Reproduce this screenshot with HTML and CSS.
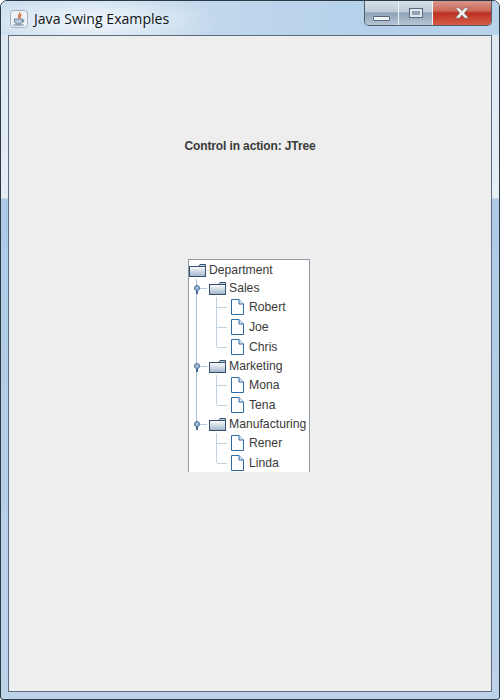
FILE: index.html
```html
<!DOCTYPE html>
<html lang="en">
<head>
    <meta charset="UTF-8">
    <title>Java Swing Examples</title>
    <link rel="stylesheet" href="styles.css">
</head>
<body>
    <div class="window">
        <div class="titlebar">
            <div class="app-icon">
                <svg width="18" height="18" viewBox="0 0 18 18">
                    <rect x="0.5" y="0.5" width="17" height="17" rx="3" fill="#eef2f6" stroke="#a3afbd"/>
                    <path d="M9.5 2.5c1.5 1.700-1.800 2.600-.8 4.400.4.6 1 .9 1 .9-.5-1.200 2-2 .9-3.500" fill="none" stroke="#d8662a" stroke-width="1.300"/>
                    <path d="M4.500 9h8v2.500c0 1.500-1.500 2.500-4 2.500s-4-1-4-2.500z" fill="#b9c6d6" stroke="#55708f" stroke-width="0.800"/>
                    <path d="M12.500 9.500c2 0 2 2.500-.5 2.500" fill="none" stroke="#55708f"/>
                    <path d="M3.500 15h10" stroke="#55708f"/>
                </svg>
            </div>
            <span class="title">Java Swing Examples</span>
            <div class="controls">
                <div class="ctl ctl-min"><span class="min-glyph"></span></div>
                <div class="ctl ctl-max"><span class="max-glyph"></span></div>
                <div class="ctl ctl-close">
                    <svg width="16" height="12" viewBox="0 0 18 14">
                        <path d="M1 1h5l3 3.500L12 1h5l-5.200 6L17 13h-5L9 9.500 6 13H1l5.200-6z" fill="#eef0f2" stroke="#6f4a46" stroke-width="0.700"/>
                    </svg>
                </div>
            </div>
        </div>
        <div class="content">
            <p class="caption">Control in action: JTree</p>
            <div class="tree">
                <div class="row root"><svg class="folder"><use href="#folder"/></svg>Department</div>
                <div class="group">
                    <div class="row node"><span class="knob"></span><svg class="folder"><use href="#folder"/></svg>Sales</div>
                    <div class="leaves">
                        <div class="row leaf"><svg class="doc"><use href="#doc"/></svg>Robert</div>
                        <div class="row leaf"><svg class="doc"><use href="#doc"/></svg>Joe</div>
                        <div class="row leaf"><svg class="doc"><use href="#doc"/></svg>Chris</div>
                    </div>
                    <div class="row node"><span class="knob"></span><svg class="folder"><use href="#folder"/></svg>Marketing</div>
                    <div class="leaves">
                        <div class="row leaf"><svg class="doc"><use href="#doc"/></svg>Mona</div>
                        <div class="row leaf"><svg class="doc"><use href="#doc"/></svg>Tena</div>
                    </div>
                    <div class="row node"><span class="knob"></span><svg class="folder"><use href="#folder"/></svg>Manufacturing</div>
                    <div class="leaves">
                        <div class="row leaf"><svg class="doc"><use href="#doc"/></svg>Rener</div>
                        <div class="row leaf"><svg class="doc"><use href="#doc"/></svg>Linda</div>
                    </div>
                </div>
            </div>
        </div>
    </div>

    <!-- shared tree icons -->
    <svg class="defs" width="0" height="0">
        <symbol id="folder" viewBox="0 0 17 13">
            <path d="M9.500 2.500 11 .5h5.500v2z" fill="#c5d2e0" stroke="#33506f"/>
            <rect x="0.500" y="2.500" width="16" height="10" fill="url(#folderFill)" stroke="#33506f"/>
            <linearGradient id="folderFill" x1="0" y1="0" x2="0" y2="1">
                <stop offset="0" stop-color="#ffffff"/>
                <stop offset="1" stop-color="#9fb3ca"/>
            </linearGradient>
        </symbol>
        <symbol id="doc" viewBox="0 0 14 17">
            <path d="M.5 .5H8L12.500 5V15.500H.5z" fill="#ffffff" stroke="#2f6aa5"/>
            <path d="M8 .5V5H12.500" fill="#e3ebf4" stroke="#2f6aa5"/>
        </symbol>
    </svg>
</body>
</html>
```

FILE: styles.css
```css
html, body { margin: 0; padding: 0; background: #ffffff; }
body { width: 500px; height: 700px; overflow: hidden; }

.window {
    width: 500px;
    height: 700px;
    box-sizing: border-box;
    display: flex;
    flex-direction: column;
    border: 1px solid #2c3a46;
    border-radius: 7px 7px 3px 3px;
    padding: 0 7px 7px;
    background: linear-gradient(#dbe7f2 0, #e6eef6 197px, #aecae6 198px, #bcd3ea 100%);
}

/* Title bar */
.titlebar {
    height: 34px;
    flex: none;
    display: flex;
    align-items: flex-start;
    margin: 0 -7px;
    padding: 0 7px;
    background:
        radial-gradient(ellipse 130px 30px at 90px 20px, rgba(255,255,255,0.8), rgba(255,255,255,0) 100%),
        linear-gradient(90deg, #c6dbee, #c2d8ec 40%, #b4d0ea 75%, #b8d2ea);
    border-radius: 6px 6px 0 0;
}
.app-icon { width: 18px; height: 18px; margin: 9px 0 0 2px; }
.title {
    margin: 8px 0 0 6px;
    font-family: "Open Sans", sans-serif;
    font-size: 14.100px;
    line-height: 20px;
    color: #10151a;
}
.controls {
    margin-left: auto;
    margin-right: 0;
    display: flex;
    height: 25px;
    border: 1px solid #4f5f6f;
    border-top: none;
    border-radius: 0 0 5px 5px;
    overflow: hidden;
    box-sizing: border-box;
}
.ctl { display: flex; align-items: center; justify-content: center; height: 100%; }
.ctl-min, .ctl-max {
    width: 34px;
    background: linear-gradient(#d5dfe8 0, #bccbd9 45%, #8ea2b6 50%, #b6c5d4 100%);
    border-right: 1px solid #eef3f8;
    box-sizing: border-box;
}
.ctl-close {
    width: 58px;
    background: linear-gradient(#d9968a 0, #cb6a59 40%, #bc3122 50%, #d65c46 100%);
}
.min-glyph {
    width: 15px;
    height: 3px;
    margin-top: 11px;
    background: #f2f4f6;
    border: 1px solid #56687b;
    border-radius: 1px;
}
.max-glyph {
    width: 8px;
    height: 4px;
    border: 2px solid #e4e9ee;
    outline: 1px solid #56687b;
    background: #8fa3b8;
}

/* Content pane */
.content {
    flex: 1;
    display: flex;
    flex-direction: column;
    align-items: center;
    background: #eeeeee;
    border: 1px solid #5c6c7c;
}
.caption {
    margin: 103px 0 0;
    font-family: "Liberation Sans", Arial, sans-serif;
    font-size: 12px;
    letter-spacing: -0.120px;
    font-weight: bold;
    line-height: 14px;
    color: #3a3a3a;
}

/* Tree */
.tree {
    width: 120px;
    height: 212px;
    box-sizing: content-box;
    margin: 106px 2px 0 0;
    background: #ffffff;
    border: 1px solid #8e9aa6;
    border-bottom: none;
    font-family: "Liberation Sans", Arial, sans-serif;
    font-size: 12.200px;
    color: #3a3a3a;
}
.row { display: flex; align-items: center; position: relative; white-space: nowrap; }
.root { height: 18px; padding-top: 1px; box-sizing: content-box; }
.node { height: 18px; padding-left: 20px; }
.leaf { height: 20px; padding-left: 42px; }

.folder { width: 17px; height: 13px; margin-right: 3px; flex: none; }
.doc { width: 14px; height: 17px; margin-right: 4px; flex: none; }

/* connector lines */
.group { position: relative; }
.group::before {
    content: "";
    position: absolute;
    left: 7px;
    top: 0;
    height: 146px;
    border-left: 1px solid #a9bfd6;
}
.knob {
    position: absolute;
    z-index: 1;
    left: 5px;
    top: 6px;
    width: 4px;
    height: 4px;
    border: 1px solid #3f6895;
    border-radius: 50%;
    background: #a8bed6;
}
.node::after {
    content: "";
    position: absolute;
    left: 10px;
    top: 9px;
    width: 8px;
    border-top: 1px solid #b5c8dc;
}
.node .knob::after {
    content: "";
    position: absolute;
    left: 1px;
    top: 5px;
    height: 3px;
    border-left: 2px solid #3f6895;
}
.leaf::before {
    content: "";
    position: absolute;
    left: 27px;
    top: 0;
    height: 100%;
    border-left: 1px solid #c4d2e0;
}
.leaf:last-child::before { height: 10px; }
.leaf::after {
    content: "";
    position: absolute;
    left: 28px;
    top: 10px;
    width: 10px;
    border-top: 1px solid #c4d2e0;
}
.defs { position: absolute; }
```
